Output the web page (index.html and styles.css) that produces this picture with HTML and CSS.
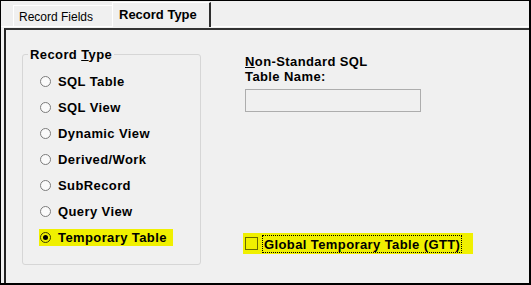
FILE: index.html
```html
<!DOCTYPE html>
<html lang="en">
<head>
    <meta charset="UTF-8">
    <meta name="viewport" content="width=device-width, initial-scale=1.0">
    <title>Record Type</title>
    <link rel="stylesheet" href="styles.css">
</head>
<body>
    <div class="window">
        <div class="tabs">
            <div class="tab">Record Fields</div>
            <div class="tab active">Record Type</div>
        </div>
        <div class="panel">
            <fieldset class="group">
                <legend>Record <u>T</u>ype</legend>
                <div class="option"><span class="opt"><span class="radio"></span>SQL Table</span></div>
                <div class="option"><span class="opt"><span class="radio"></span>SQL View</span></div>
                <div class="option"><span class="opt"><span class="radio"></span>Dynamic View</span></div>
                <div class="option"><span class="opt"><span class="radio"></span>Derived/Work</span></div>
                <div class="option"><span class="opt"><span class="radio"></span>SubRecord</span></div>
                <div class="option"><span class="opt"><span class="radio"></span>Query View</span></div>
                <div class="option"><span class="opt marked"><span class="radio checked"></span>Temporary Table</span></div>
            </fieldset>
            <div class="side">
                <div class="label"><u>N</u>on-Standard SQL<br>Table Name:</div>
                <div class="textbox"></div>
                <div class="gtt">
                    <span class="checkbox"></span>
                    <span class="focus">Global Temporary Table (GTT)</span>
                </div>
            </div>
        </div>
    </div>
</body>
</html>
```

FILE: styles.css
```css
body {
    margin: 0;
    font-family: "Liberation Sans", Arial, sans-serif;
    color: #000;
}

.window {
    width: 531px;
    height: 285px;
    box-sizing: border-box;
    border-top: 1px solid #000;
    border-left: 1px solid #000;
    border-right: 2px solid #000;
    border-bottom: 2px solid #000;
    background-color: #f0f0f0;
    display: flex;
    flex-direction: column;
}

/* tab strip */
.tabs {
    height: 25px;
    display: flex;
    align-items: flex-end;
    padding-left: 12px;
    border-bottom: 1px solid #fff;
    margin-bottom: 1px;
}

.tab {
    box-sizing: border-box;
    width: 99px;
    height: 21px;
    padding: 4px 0 0 5px;
    border-top: 1px solid #fff;
    border-left: 1px solid #fff;
    font-size: 12px;
    line-height: 14px;
}

.tab.active {
    height: 25px;
    margin-bottom: -1px;
    padding: 4px 0 0 6px;
    border-right: 2px solid #2e2e2e;
    background-color: #f0f0f0;
    font-size: 13px;
    font-weight: bold;
    line-height: 15px;
}

/* panel */
.panel {
    flex: 1;
    margin-left: 3px;
    border-top: 2px solid #333;
    border-left: 2px solid #222;
    display: flex;
    align-items: flex-start;
    padding-left: 16px;
    gap: 44px;
    font-size: 13px;
    font-weight: bold;
    letter-spacing: 0.4px;
    line-height: 15px;
}

.group {
    box-sizing: border-box;
    width: 179px;
    margin: 17px 0 0 0;
    padding: 6px 0 14px 17px;
    border: 1px solid #d6d6d6;
    border-radius: 3px;
}

.group legend {
    margin-left: -12px;
    padding: 0 2px;
}

.option {
    height: 26px;
    display: flex;
    align-items: center;
}

.opt {
    display: inline-flex;
    align-items: center;
    gap: 7px;
    height: 17px;
}

.opt.marked {
    background-color: #f0f000;
    margin-left: -1px;
    padding: 0 6px 0 1px;
}

.radio {
    box-sizing: border-box;
    width: 11px;
    height: 11px;
    border: 1px solid #7c7c7c;
    border-radius: 50%;
    background-color: #fafafa;
    display: flex;
    align-items: center;
    justify-content: center;
}

.radio.checked {
    border-color: #3a3a00;
    background-color: #f0f000;
}

.radio.checked::after {
    content: "";
    width: 5px;
    height: 5px;
    border-radius: 50%;
    background-color: #000;
}

.side {
    margin-top: 24px;
    display: flex;
    flex-direction: column;
    align-items: flex-start;
}

.textbox {
    box-sizing: border-box;
    width: 176px;
    height: 23px;
    margin-top: 5px;
    border: 1px solid #adadad;
    background-color: #f0f0f0;
}

.gtt {
    margin: 121px 0 0 -2px;
    height: 21px;
    padding: 0 11px 0 2px;
    display: inline-flex;
    align-items: center;
    background-color: #f0f000;
}

.checkbox {
    box-sizing: border-box;
    width: 13px;
    height: 13px;
    border: 1px solid #6a6a00;
    background-color: #f0f000;
}

.focus {
    margin-left: 4px;
    height: 18px;
    box-sizing: border-box;
    padding: 1px 1px 0 1px;
    border: 1px dotted #000;
}
```
